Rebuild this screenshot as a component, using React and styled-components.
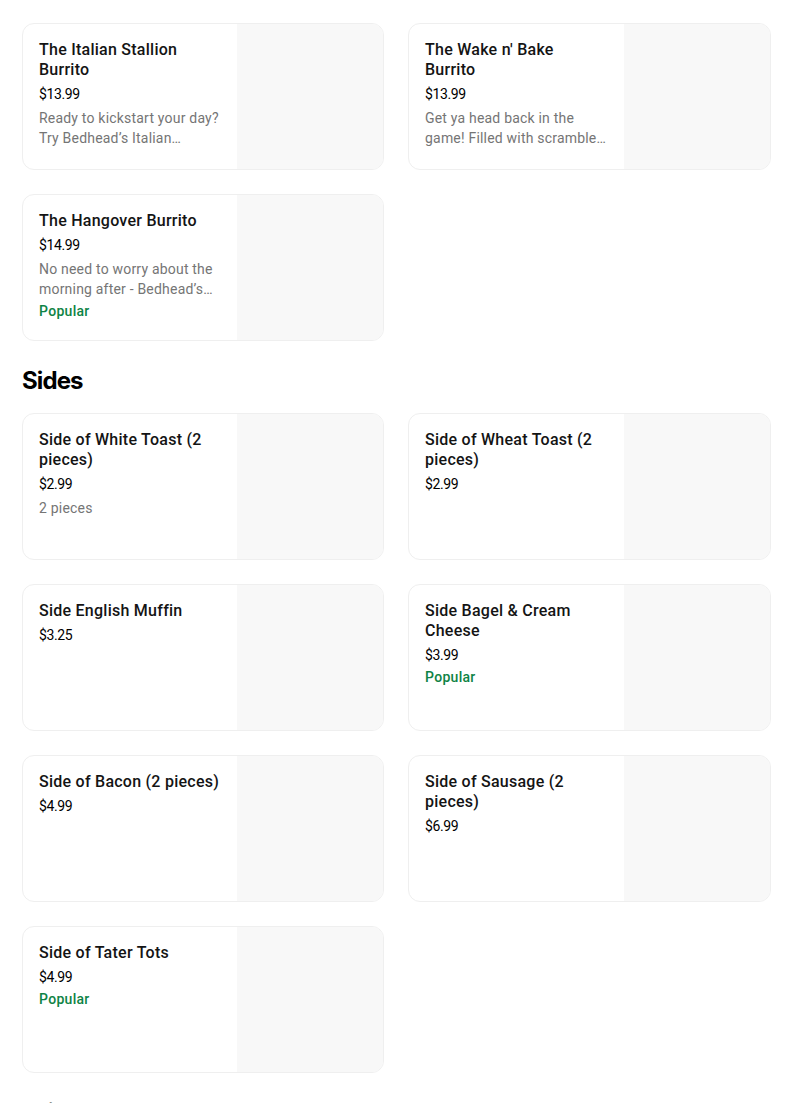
import React from 'react';
import styled, { createGlobalStyle } from 'styled-components';

const GlobalStyle = createGlobalStyle`
	body {
		margin: 0;
		background: #ffffff;
		font-family: Roboto, "Liberation Sans", sans-serif;
		color: #000000;
	}
`;

const sections = [
	{
		title: null,
		items: [
			{ name: 'The Italian Stallion Burrito', price: '$13.99', desc: 'Ready to kickstart your day? Try Bedhead\u2019s Italian\u2026' },
			{ name: "The Wake n' Bake Burrito", price: '$13.99', desc: 'Get ya head back in the game! Filled with scramble\u2026' },
			{ name: 'The Hangover Burrito', price: '$14.99', desc: 'No need to worry about the morning after - Bedhead\u2019s\u2026', popular: true },
		],
	},
	{
		title: 'Sides',
		items: [
			{ name: 'Side of White Toast (2 pieces)', price: '$2.99', desc: '2 pieces' },
			{ name: 'Side of Wheat Toast (2 pieces)', price: '$2.99' },
			{ name: 'Side English Muffin', price: '$3.25' },
			{ name: 'Side Bagel & Cream Cheese', price: '$3.99', popular: true },
			{ name: 'Side of Bacon (2 pieces)', price: '$4.99' },
			{ name: 'Side of Sausage (2 pieces)', price: '$6.99' },
			{ name: 'Side of Tater Tots', price: '$4.99', popular: true },
		],
	},
	{
		title: 'Drinks',
		items: [],
	},
];

const MenuCard = ({ name, price, desc, popular }) => (
	<Card>
		<CardBody>
			<ItemName>{name}</ItemName>
			<Price>{price}</Price>
			{desc ? <Description>{desc}</Description> : null}
			{popular ? <Popular>Popular</Popular> : null}
		</CardBody>
		<Thumb />
	</Card>
);

const App = () => (
	<Page>
		<GlobalStyle />
		{sections.map((section, i) => (
			<Section key={i}>
				{section.title ? <SectionTitle>{section.title}</SectionTitle> : null}
				{section.items.length ? (
					<Grid>
						{section.items.map((item) => <MenuCard key={item.name} {...item} />)}
					</Grid>
				) : null}
			</Section>
		))}
	</Page>
);

const Page = styled.div`
	width: 749px;
	padding: 23px 0 0 22px;
	display: flex;
	flex-direction: column;
	gap: 24px;
`;

const Section = styled.section`
	display: flex;
	flex-direction: column;
	gap: 16px;
`;

const SectionTitle = styled.h2`
	margin: 0;
	font-family: Inter, "Liberation Sans", sans-serif;
	font-size: 24px;
	line-height: 32px;
	font-weight: 700;
	letter-spacing: -0.9px;
	color: #000000;
`;

const Grid = styled.div`
	display: grid;
	grid-template-columns: 362px 363px;
	gap: 24px;
`;

const Card = styled.div`
	display: flex;
	height: 147px;
	box-sizing: border-box;
	border: 1px solid #efefef;
	border-radius: 12px;
	overflow: hidden;
	background: #ffffff;
`;

const CardBody = styled.div`
	flex: 1;
	min-width: 0;
	padding: 16px 16px 0 16px;
	display: flex;
	flex-direction: column;
`;

const ItemName = styled.div`
	font-size: 16px;
	line-height: 20px;
	font-weight: 500;
	letter-spacing: 0.25px;
	color: #141414;
`;

const Price = styled.div`
	margin-top: 4px;
	font-size: 14px;
	line-height: 20px;
	letter-spacing: -0.4px;
	color: #000000;
`;

const Description = styled.div`
	margin-top: 4px;
	font-size: 14px;
	line-height: 20px;
	letter-spacing: 0.2px;
	color: #757575;
`;

const Popular = styled.div`
	margin-top: 2px;
	font-size: 14px;
	line-height: 20px;
	font-weight: 500;
	letter-spacing: 0.3px;
	color: #0e8345;
`;

const Thumb = styled.div`
	width: 146px;
	flex-shrink: 0;
	background: #f8f8f8;
`;

export default App;
